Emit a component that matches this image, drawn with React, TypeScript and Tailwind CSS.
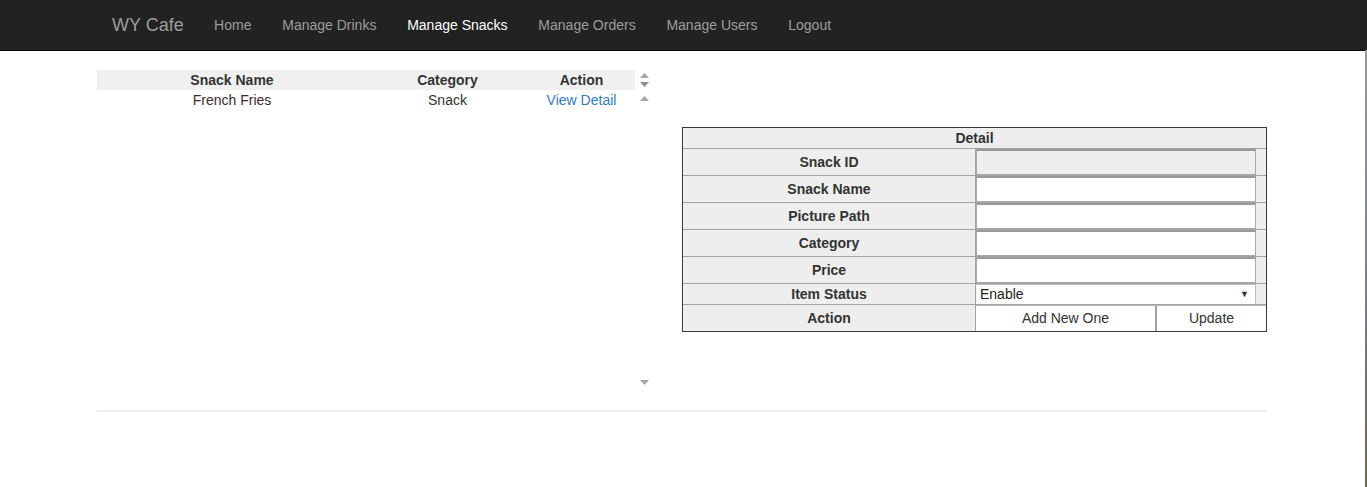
import React from "react";

const navLinks = [
  { label: "Home", active: false },
  { label: "Manage Drinks", active: false },
  { label: "Manage Snacks", active: true },
  { label: "Manage Orders", active: false },
  { label: "Manage Users", active: false },
  { label: "Logout", active: false },
];

function Up({ color = "#a6a6a6" }: { color?: string }) {
  return (
    <svg width="9" height="5" viewBox="0 0 9 5" className="block">
      <polygon points="4.5,0 9,5 0,5" fill={color} />
    </svg>
  );
}
function Down({ color = "#a6a6a6" }: { color?: string }) {
  return (
    <svg width="9" height="5" viewBox="0 0 9 5" className="block">
      <polygon points="0,0 9,0 4.5,5" fill={color} />
    </svg>
  );
}

function InputRow({ label, disabled }: { label: string; disabled?: boolean }) {
  return (
    <div className="flex h-[27px] border-t border-[#a3a3a3]">
      <div className="w-[293px] flex items-center justify-center font-bold border-r border-[#a3a3a3] bg-[#eeeeee]">
        {label}
      </div>
      <div className="flex-1 bg-[#eeeeee] pr-[10px] flex">
        <div
          className={
            "w-full h-full border border-[#a9a9a9] border-t-2 border-t-[#9a9a9a] " +
            (disabled ? "bg-[#eeeeee]" : "bg-white")
          }
        />
      </div>
    </div>
  );
}

export default function App() {
  return (
    <div
      className="min-h-[487px] bg-white text-[14px] text-[#333] relative"
      style={{ fontFamily: '"Liberation Sans", Arial, sans-serif' }}
    >
      <nav className="h-[51px] bg-[#222222] border-b border-[#080808]">
        <div className="ml-[97px] w-[1170px] px-[15px] flex h-[50px]">
          <a className="text-[18px] leading-[20px] text-[#9d9d9d] py-[15px] pr-[15px]">WY Cafe</a>
          <ul className="flex">
            {navLinks.map((l) => (
              <li key={l.label}>
                <a
                  className={
                    "block px-[15.4px] py-[15px] leading-[20px] text-[14px] " +
                    (l.active ? "text-white" : "text-[#9d9d9d]")
                  }
                >
                  {l.label}
                </a>
              </li>
            ))}
          </ul>
        </div>
      </nav>

      <div className="ml-[97px] w-[1170px] pt-[19px]">
        <div className="flex">
          {/* Left list */}
          <div className="w-[585px] h-[321px] flex flex-col">
            <div className="flex h-[20px]">
              <div className="w-[538px] bg-[#f0f0f0] flex font-bold leading-[20px]">
                <div className="w-[270px] text-center">Snack Name</div>
                <div className="w-[161px] text-center">Category</div>
                <div className="w-[107px] text-center">Action</div>
              </div>
              <div className="w-[17px] flex flex-col items-center justify-center gap-[4px] ml-[1px]">
                <Up />
                <Down color="#8f8f8f" />
              </div>
            </div>
            <div className="flex flex-1">
              <div className="w-[538px]">
                <div className="flex h-[20px] leading-[20px]">
                  <div className="w-[270px] text-center text-[#3a2a30]">French Fries</div>
                  <div className="w-[161px] text-center">Snack</div>
                  <div className="w-[107px] text-center text-[#337ab7]">View Detail</div>
                </div>
              </div>
              <div className="w-[17px] ml-[1px] flex flex-col items-center justify-between pt-[6px] pb-[6px]">
                <Up />
                <Down />
              </div>
            </div>
          </div>

          {/* Detail */}
          <div className="w-[585px] pt-[57px]">
            <div className="border border-[#3a3a3a]">
              <div className="h-[20px] bg-[#eeeeee] flex items-center justify-center font-bold">Detail</div>
              <InputRow label="Snack ID" disabled />
              <InputRow label="Snack Name" />
              <InputRow label="Picture Path" />
              <InputRow label="Category" />
              <InputRow label="Price" />
              <div className="flex h-[21px] border-t border-[#a3a3a3]">
                <div className="w-[293px] flex items-center justify-center font-bold border-r border-[#a3a3a3] bg-[#eeeeee]">
                  Item Status
                </div>
                <div className="flex-1 bg-[#eeeeee] pr-[10px] flex">
                  <div className="w-full h-full bg-white border-t border-[#bdbdbd] border-r border-r-[#bdbdbd] flex items-center justify-between pl-[4px] pr-[6px] text-[#222]">
                    <span>Enable</span>
                    <span className="text-[9px] text-[#333]">▼</span>
                  </div>
                </div>
              </div>
              <div className="flex h-[27px] border-t border-[#a3a3a3]">
                <div className="w-[293px] flex items-center justify-center font-bold border-r border-[#a3a3a3] bg-[#eeeeee]">
                  Action
                </div>
                <div className="flex-1 flex bg-[#eeeeee]">
                  <div className="w-[181px] h-full bg-white border-r-2 border-[#a3a3a3] border-t border-t-[#bdbdbd] flex items-center justify-center">
                    Add New One
                  </div>
                  <div className="flex-1 h-full bg-white border-t border-[#bdbdbd] flex items-center justify-center">
                    Update
                  </div>
                </div>
              </div>
            </div>
          </div>
        </div>
        <hr className="mt-[19px] border-0 border-t-2 border-[#eeeeee]" />
      </div>

      <div className="absolute right-0 top-[50px] bottom-0 w-[2px] bg-gradient-to-b from-[#9a9a9a] via-[#7a8290] to-[#6e6a4a]" />
    </div>
  );
}
